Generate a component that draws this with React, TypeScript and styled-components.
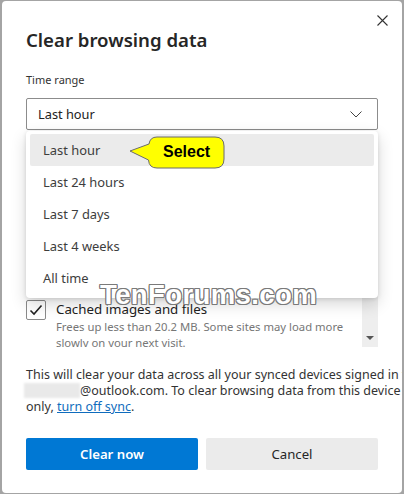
import React from 'react';
import styled, { createGlobalStyle } from 'styled-components';

const GlobalStyle = createGlobalStyle`
    html, body {
        margin: 0;
        padding: 0;
        background: #a4a4a4;
    }
    body {
        font-family: 'Noto Sans', 'Open Sans', sans-serif;
    }
`;

const timeRanges = ['Last hour', 'Last 24 hours', 'Last 7 days', 'Last 4 weeks', 'All time'];

const ChevronDown = () => (
    <svg width="12" height="7" viewBox="0 0 12 7">
        <path d="M0.5 0.5 L6 6 L11.5 0.5" fill="none" stroke="#444" strokeWidth="1" />
    </svg>
);

const CloseIcon = () => (
    <svg width="11" height="11" viewBox="0 0 11 11">
        <path d="M0.5 0.5 L10.5 10.5 M10.5 0.5 L0.5 10.5" stroke="#333" strokeWidth="1.1" fill="none" />
    </svg>
);

const CheckIcon = () => (
    <svg width="14" height="12" viewBox="0 0 14 12">
        <path d="M1.5 6.5 L5 10 L12.5 1.5" fill="none" stroke="#222" strokeWidth="1.6" />
    </svg>
);

const CalloutShape = () => (
    <svg width="98" height="36" viewBox="0 0 98 36">
        <path
            d="M29 2 H87 Q96 2 96 11 V24 Q96 33 87 33 H29 Q21 33 20.5 25 L2 16 L21 9 Q22 2 29 2 Z"
            fill="#ffff00"
            stroke="#6b6b6b"
            strokeWidth="1"
        />
    </svg>
);

const App = () => {
    return (
        <>
            <GlobalStyle />
            <Backdrop>
                <Dialog>
                    <CloseButton aria-label="Close">
                        <CloseIcon />
                    </CloseButton>
                    <Title>Clear browsing data</Title>
                    <FieldLabel>Time range</FieldLabel>
                    <SelectArea>
                        <SelectBox>
                            <span>Last hour</span>
                            <ChevronDown />
                        </SelectBox>
                        <ListArea>
                            <ListContent>
                                <CheckRow>
                                    <CheckBox><CheckIcon /></CheckBox>
                                    <CheckText>
                                        <CheckTitle>Cached images and files</CheckTitle>
                                        <CheckDetail>
                                            Frees up less than 20.2 MB. Some sites may load more
                                            <br />
                                            slowly on your next visit.
                                        </CheckDetail>
                                    </CheckText>
                                </CheckRow>
                            </ListContent>
                            <ScrollTrack>
                                <ScrollArrow />
                            </ScrollTrack>
                        </ListArea>
                        <Dropdown>
                            {timeRanges.map((range, index) => (
                                <Option key={range} selected={index === 0}>
                                    {range}
                                </Option>
                            ))}
                        </Dropdown>
                        <Callout>
                            <CalloutShape />
                            <CalloutText>Select</CalloutText>
                        </Callout>
                    </SelectArea>
                    <SyncNote>
                        This will clear your data across all your synced devices signed in to
                        <br />
                        <BlurredEmail />@outlook.com. To clear browsing data from this device
                        <br />
                        only, <SyncLink href="#">turn off sync</SyncLink>.
                    </SyncNote>
                    <Buttons>
                        <PrimaryButton>Clear now</PrimaryButton>
                        <SecondaryButton>Cancel</SecondaryButton>
                    </Buttons>
                    <Watermark>TenForums.com</Watermark>
                </Dialog>
            </Backdrop>
        </>
    );
};

const Backdrop = styled.div`
    width: 404px;
    height: 494px;
    padding: 1px 2px 1px 2px;
    box-sizing: border-box;
`;

const Dialog = styled.div`
    position: relative;
    width: 400px;
    height: 492px;
    box-sizing: border-box;
    padding: 24px 24px 0 24px;
    background: #ffffff;
    border-radius: 4px;
    display: flex;
    flex-direction: column;
    overflow: hidden;
`;

const CloseButton = styled.button`
    position: absolute;
    top: 14px;
    right: 14px;
    width: 11px;
    height: 11px;
    padding: 0;
    border: none;
    background: none;
    display: flex;
`;

const Title = styled.h1`
    margin: 0;
    font-size: 18.6px;
    line-height: 30px;
    font-weight: 600;
    color: #262626;
`;

const FieldLabel = styled.div`
    margin-top: 16px;
    font-size: 11px;
    line-height: 18px;
    color: #333;
`;

const SelectArea = styled.div`
    position: relative;
    margin-top: 9px;
    display: flex;
    flex-direction: column;
`;

const SelectBox = styled.div`
    height: 32px;
    box-sizing: border-box;
    border: 1px solid #8c8c8c;
    border-radius: 2px;
    padding: 0 15px 0 11px;
    display: flex;
    align-items: center;
    justify-content: space-between;
    font-size: 12.8px;
    color: #222;
`;

const ListArea = styled.div`
    margin-top: 12px;
    height: 205px;
    display: flex;
    overflow: hidden;
`;

const ListContent = styled.div`
    flex: 1;
    min-width: 0;
    overflow: hidden;
    display: flex;
    flex-direction: column;
    justify-content: flex-end;
`;

const CheckRow = styled.div`
    flex: none;
    display: flex;
    gap: 10px;
    margin-bottom: -4px;
`;

const CheckBox = styled.div`
    flex: none;
    width: 20px;
    height: 20px;
    margin-top: 1px;
    box-sizing: border-box;
    border: 1px solid #8a8a8a;
    border-radius: 2px;
    display: flex;
    align-items: center;
    justify-content: center;
`;

const CheckText = styled.div`
    display: flex;
    flex-direction: column;
`;

const CheckTitle = styled.div`
    font-size: 13.3px;
    line-height: 20px;
    color: #222;
`;

const CheckDetail = styled.div`
    font-size: 11.3px;
    line-height: 16px;
    color: #767676;
    white-space: nowrap;
`;

const ScrollTrack = styled.div`
    flex: none;
    width: 16px;
    background: #eeeeee;
    display: flex;
    align-items: flex-end;
    justify-content: center;
    padding-bottom: 7px;
    box-sizing: border-box;
`;

const ScrollArrow = styled.div`
    width: 0;
    height: 0;
    border-left: 4px solid transparent;
    border-right: 4px solid transparent;
    border-top: 4px solid #555;
`;

const Dropdown = styled.div`
    position: absolute;
    top: 33px;
    left: 0;
    right: 0;
    padding: 3px 4px 4px 4px;
    background: #ffffff;
    border-radius: 4px;
    box-shadow: 0 6px 16px rgba(0, 0, 0, 0.16), 0 1px 4px rgba(0, 0, 0, 0.12);
    display: flex;
    flex-direction: column;
`;

const Option = styled.div<{ selected?: boolean }>`
    height: 32px;
    padding-left: 13px;
    display: flex;
    align-items: center;
    border-radius: 2px;
    font-size: 12.9px;
    color: #3d3d3d;
    background: ${(props) => (props.selected ? '#ebebeb' : 'transparent')};
`;

const Callout = styled.div`
    position: absolute;
    top: 37px;
    left: 102px;
    width: 98px;
    height: 36px;
`;

const CalloutText = styled.span`
    position: absolute;
    left: 35px;
    top: 8px;
    font-family: 'Liberation Sans', Arial, sans-serif;
    font-weight: 700;
    font-size: 16px;
    line-height: 18px;
    color: #000;
`;

const SyncNote = styled.p`
    margin: 20px 0 0 0;
    font-size: 12.5px;
    line-height: 16px;
    color: #333;
    white-space: nowrap;
`;

const BlurredEmail = styled.span`
    display: inline-block;
    width: 56px;
    height: 15px;
    margin-left: -2px;
    vertical-align: -3px;
    background: #e9e9e9;
    filter: blur(0.8px);
`;

const SyncLink = styled.a`
    color: #0f6cbd;
    text-decoration: underline;
`;

const Buttons = styled.div`
    margin-top: 23px;
    display: flex;
    gap: 8px;
`;

const BaseButton = styled.button`
    flex: 1;
    height: 32px;
    border: none;
    border-radius: 2px;
    font-family: inherit;
    font-size: 13.2px;
`;

const PrimaryButton = styled(BaseButton)`
    background: #0078d4;
    color: #ffffff;
    font-weight: 600;
`;

const SecondaryButton = styled(BaseButton)`
    background: #ebebeb;
    color: #262626;
`;

const Watermark = styled.div`
    position: absolute;
    left: 98px;
    top: 278px;
    font-family: 'Liberation Sans', Arial, sans-serif;
    font-weight: 700;
    font-size: 27.5px;
    letter-spacing: 0.4px;
    color: #ffffff;
    text-shadow: 1px 0 0 #7a7a7a, -1px 0 0 #7a7a7a, 0 1px 0 #7a7a7a, 0 -1px 0 #7a7a7a,
        1px 1px 0 #7a7a7a, -1px -1px 0 #7a7a7a, 1px -1px 0 #7a7a7a, -1px 1px 0 #7a7a7a;
    pointer-events: none;
`;

export default App;
